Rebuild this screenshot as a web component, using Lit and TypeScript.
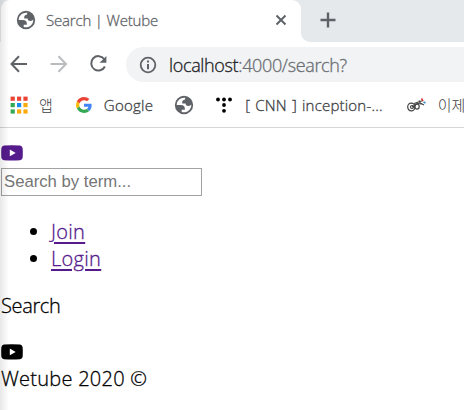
import { LitElement, html, css, svg } from "lit";
import { customElement } from "lit/decorators.js";

const globe = html`<svg class="globe" viewBox="0 0 24 24"><path fill-rule="evenodd" d="M12 2a10 10 0 1 0 0 20a10 10 0 1 0 0-20zM4 12h4.4c3.407.022 4.922 1.73 4.543 5.127H9.488v2.47a8.004 8.004 0 0 0 10.498-8.083C19.327 12.504 18.332 13 17 13c-2.137 0-3.206-.916-3.206-2.75h-3.748c-.274-2.728.683-4.092 2.87-4.092 0-.975.327-1.597.811-1.97A8.004 8.004 0 0 0 4 12z"/></svg>`;
const tubePath = "M3 .6Q11-.2 19 .6Q21 .8 21.6 3Q22 8 21.6 13Q21 15 19 15.2Q11 16 3 15.2Q1 15 .4 13Q0 8 .4 3Q1 .8 3 .6ZM8.8 4.6V11.2L14.7 7.9Z";
const appColors = ["#ea4335", "#ea4335", "#ea4335", "#34a853", "#1a8cf0", "#fbab09", "#34a853", "#fbab09", "#fbab09"];

@customElement("app-root")
export class AppRoot extends LitElement {
  static styles = css`
    :host { display: block; position: relative; width: 464px; height: 410px; overflow: hidden; background: #fff; color: #000; font-family: "Open Sans", "Noto Sans CJK KR", sans-serif; font-weight: 300; -webkit-text-stroke: .3px currentColor; }
    * { box-sizing: border-box; }
    svg { display: block; flex: none; }
    span, p, a { white-space: pre; }
    .strip { display: flex; height: 42px; background: #e5e9ec; }
    .tab { width: 300px; margin-left: 1px; border-radius: 9px 9px 0 0; background: #fff; display: flex; align-items: center; padding: 0 0 2px 14px; color: #5f6368; }
    .globe { width: 22px; height: 22px; fill: #5f6368; }
    .title { font-size: 15px; letter-spacing: -.18px; margin-left: 9px; flex: 1; }
    .close { margin-right: 14px; }
    .rest { flex: 1; border-bottom-left-radius: 9px; background: #e5e9ec; padding: 12px 0 0 19px; }
    .under { flex: 1; background: #fff; display: flex; }
    .toolbar { display: flex; align-items: center; height: 45px; padding: 0 0 1px 9px; }
    .nav { width: 20px; height: 20px; margin-right: 20px; fill: none; stroke: #5f6368; stroke-width: 2; }
    .off { stroke: #babcbe; }
    .address { flex: 1; height: 35px; margin: 1px 0 0 -3px; background: #f1f3f4; border-radius: 18px 0 0 18px; display: flex; align-items: center; padding-left: 13px; font-size: 18px; color: #6a6e73; }
    .url { margin-left: 12px; letter-spacing: -.35px; }
    .host { color: #202124; }
    .marks { display: flex; align-items: center; height: 41px; border-bottom: 1px solid #d5d6d8; padding: 0 0 5px 10px; font-size: 15px; color: #3c4043; }
    .marks span { flex: none; }
    .ko { -webkit-text-stroke: 0; }
    .m1 { margin: 0 23px 0 11px; } .m2 { margin: 0 20px 0 12px; letter-spacing: .25px; } .m3 { margin: 0 24px 0 13px; word-spacing: 1px; letter-spacing: .2px; } .m4 { margin-left: 12px; }
    .gap { margin-right: 21px; }
    .page { padding: 17px 0 0 1px; font-size: 20px; line-height: 27px; }
    .yt { width: 22px; height: 16px; fill: #551a8b; }
    .black { fill: #000; }
    .field { display: block; width: 201px; height: 28px; margin: 7px 0 22px; border: 1px solid #a2a2a2; padding: 0 2px; font: 16.7px "Liberation Sans", sans-serif; background: #fff; outline: none; -webkit-text-stroke: 0; }
    .field::placeholder { color: #757575; opacity: 1; }
    .list { margin: 0; padding-left: 50px; }
    .link { color: #551a8b; letter-spacing: .3px; text-decoration: underline; text-underline-offset: 3px; text-decoration-thickness: 1.5px; }
    .para { margin: 20px 0 25px; letter-spacing: -.35px; }
    .foot { margin: 5px 0 0; letter-spacing: .25px; }
    .shade { position: absolute; left: 0; top: 0; width: 9px; height: 410px; background: linear-gradient(90deg, rgba(0,0,0,.09), transparent); pointer-events: none; }
  `;
  render() {
    return html`
      <div class="strip">
        <div class="tab">${globe}<span class="title">Search | Wetube</span>
          <svg class="close" width="12" height="12" viewBox="0 0 12 12"><path d="M1.5 1.5l9 9m0-9l-9 9" stroke="#5f6368" stroke-width="2"/></svg></div>
        <div class="under"><div class="rest"><svg width="16" height="16" viewBox="0 0 16 16"><path d="M8 .5v15M.5 8h15" stroke="#5f6368" stroke-width="2.4"/></svg></div></div>
      </div>
      <div class="toolbar">
        <svg class="nav" viewBox="0 0 20 20"><path d="M18 10H3M10 2.3L2.5 10L10 17.7"/></svg>
        <svg class="nav off" viewBox="0 0 20 20"><path d="M1.5 10h15M9.5 2.3L17 10L9.5 17.7"/></svg>
        <svg class="nav" viewBox="0 0 20 20"><path d="M15.2 5A7.2 7.2 0 1 0 15.9 12.5"/><path d="M17.4 2v6.8H10.6z" fill="#5f6368" stroke="none"/></svg>
        <div class="address"><svg width="18" height="18" viewBox="0 0 18 18"><circle cx="9" cy="9" r="7.3" fill="none" stroke="#5f6368" stroke-width="1.8"/><path d="M9 4.6v2M9 8v5.2" stroke="#5f6368" stroke-width="2"/></svg><span class="url"><span class="host">localhost</span>:4000/search?</span></div>
      </div>
      <div class="marks">
        <svg width="18" height="18" viewBox="0 0 18 18">${appColors.map((c, i) => svg`<rect x=${(i % 3) * 6.4 + 0.6} y=${Math.floor(i / 3) * 6.4 + 0.6} width="4.2" height="4.2" fill=${c}/>`)}</svg>
        <span class="m1 ko">앱</span>
        <svg width="16" height="16" viewBox="0 0 48 48"><path fill="#EA4335" d="M24 9.5c3.54 0 6.71 1.22 9.21 3.6l6.85-6.85C35.9 2.38 30.47 0 24 0 14.62 0 6.51 5.38 2.56 13.22l7.98 6.19C12.43 13.72 17.74 9.5 24 9.5z"/><path fill="#4285F4" d="M46.98 24.55c0-1.57-.15-3.09-.38-4.55H24v9.02h12.94c-.58 2.96-2.26 5.48-4.78 7.18l7.73 6c4.51-4.18 7.09-10.36 7.09-17.65z"/><path fill="#FBBC05" d="M10.53 28.59c-.48-1.45-.76-2.99-.76-4.59s.27-3.14.76-4.59l-7.98-6.19C.92 16.46 0 20.12 0 24c0 3.88.92 7.54 2.56 10.78z"/><path fill="#34A853" d="M24 48c6.48 0 11.93-2.13 15.89-5.81l-7.73-6c-2.15 1.45-4.92 2.3-8.16 2.3-6.26 0-11.57-4.22-13.47-9.91l-7.98 6.19C6.51 42.62 14.62 48 24 48z"/></svg>
        <span class="m2">Google</span>
        <div class="gap">${globe}</div>
        <svg width="16" height="16" viewBox="0 0 16 16"><circle cx="2" cy="2.5" r="1.9"/><circle cx="8" cy="2.5" r="1.9"/><circle cx="14" cy="2.5" r="1.9"/><circle cx="8" cy="8" r="1.9"/><circle cx="8" cy="13.8" r="1.9"/></svg>
        <span class="m3">[ CNN ] inception-...</span>
        <svg width="19" height="16" viewBox="0 0 19 16"><g fill="none" stroke="#444" stroke-width="1.2"><ellipse cx="4.3" cy="10" rx="3.6" ry="3.9"/><circle cx="5" cy="10" r="1.5"/><ellipse cx="10" cy="9.5" rx="2.2" ry="2.6"/><path d="M5 10l5-3 3-1 4 2M12 3.5l2 4M7 6.5l9-3"/></g><path d="M14.5 1.5l1.5 2.5" stroke="#d33" stroke-width="1.5"/><path d="M16.5 5l2 1" stroke="#38c" stroke-width="1.5"/></svg>
        <span class="m4 ko">이제</span>
      </div>
      <div class="page">
        <svg class="yt" viewBox="0 0 22 16"><path fill-rule="evenodd" d=${tubePath}/></svg>
        <input class="field" placeholder="Search by term..." />
        <ul class="list"><li><a class="link">Join</a></li><li><a class="link">Login</a></li></ul>
        <p class="para">Search</p>
        <svg class="yt black" viewBox="0 0 22 16"><path fill-rule="evenodd" d=${tubePath}/></svg>
        <p class="foot">Wetube 2020 ©</p>
      </div>
      <div class="shade"></div>`;
  }
}
